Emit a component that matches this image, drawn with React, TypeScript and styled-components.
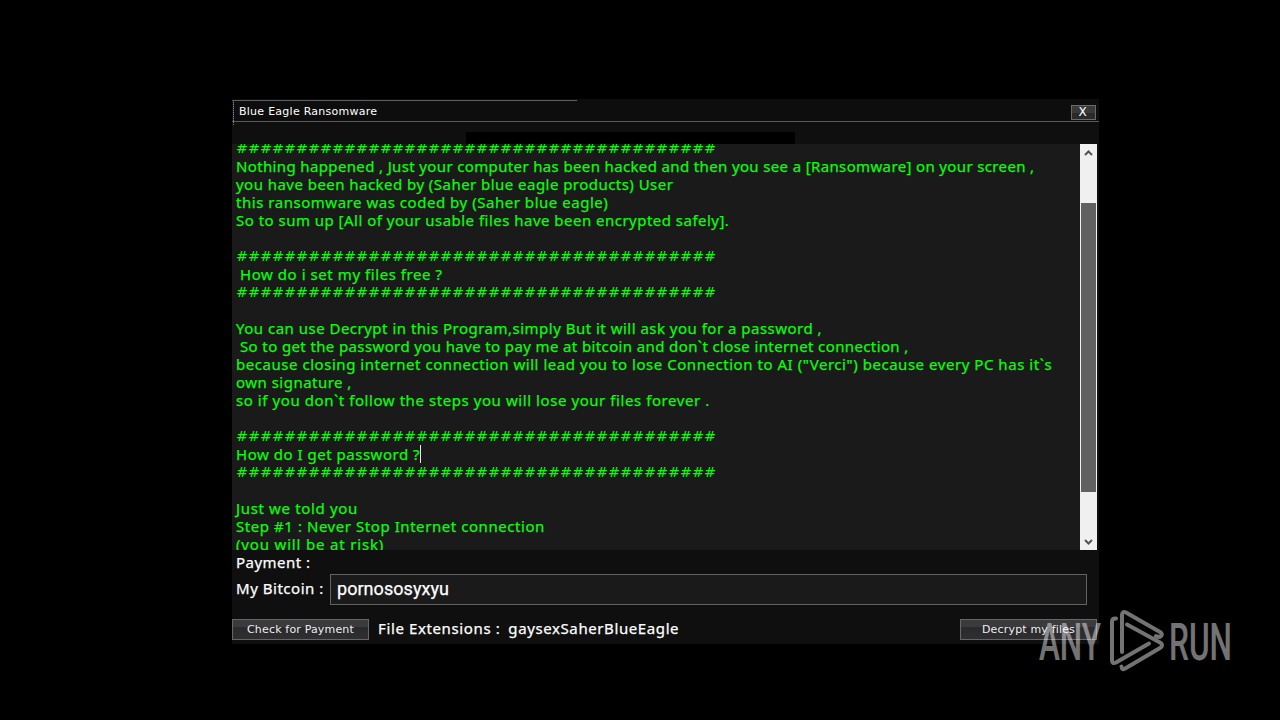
import styled, { createGlobalStyle } from "styled-components";

const GlobalStyle = createGlobalStyle`
  * {
    box-sizing: border-box;
  }
  body {
    margin: 0;
    background-color: #000;
    overflow: hidden;
  }
`;

const Screen = styled.div`
  position: relative;
  width: 1280px;
  height: 720px;
  padding: 99px 181px 76px 232px;
  background-color: #000;
`;

const Window = styled.main`
  display: flex;
  flex-direction: column;
  height: 545px;
  background-color: #0f0f0f;
  font-family: "Noto Sans", sans-serif;
  font-size: 15px;
  color: #fff;
  -webkit-text-stroke: 0.25px;
`;

const TitleBar = styled.header`
  display: flex;
  align-items: center;
  justify-content: space-between;
  height: 23px;
  padding: 3px 3px 0 7px;
  border-bottom: 1px solid #5a5a5a;
  background:
    linear-gradient(#5e5e5e, #5e5e5e) 0 1px / 345px 1px no-repeat,
    repeating-linear-gradient(#8a8a8a 0 1px, #333 1px 2px) 1px 1px / 1px 100% no-repeat,
    #0d0d0d;
  -webkit-text-stroke: 0;
`;

const Title = styled.h1`
  margin: 0;
  font: 11px "DejaVu Sans", sans-serif;
  letter-spacing: 0.26px;
`;

const CloseButton = styled.button`
  width: 25px;
  height: 15px;
  margin-top: 2px;
  padding: 0 2px 0 0;
  border: 1px solid #6a6a6a;
  background: linear-gradient(#3a3a3a 50%, #2a2a2a 50%);
  color: #fff;
  font: 12px/13px "DejaVu Sans", sans-serif;
`;

const Banner = styled.div`
  display: flex;
  align-items: flex-end;
  height: 22px;
  padding-left: 234px;
  background: repeating-linear-gradient(#777 0 1px, #222 1px 2px) 1px 0 / 1px 4px no-repeat;
`;

const BannerBlock = styled.div`
  width: 329px;
  height: 12px;
  background-color: #000;
`;

const Message = styled.section`
  display: flex;
  height: 406px;
  margin-right: 2px;
  overflow: hidden;
  background-color: #1a1a1a;
`;

const MessageText = styled.div`
  flex: 1;
  margin-top: -5px;
  padding-left: 4px;
  color: #0cfc0c;
`;

const Line = styled.div<{ $spacing?: number; $indent?: number }>`
  display: flex;
  height: 18px;
  padding-left: ${(props) => props.$indent ?? 0}px;
  line-height: 18px;
  letter-spacing: ${(props) => props.$spacing ?? 0}px;
  white-space: pre;
`;

const HashLine = styled.div`
  height: 18px;
  font: italic 14.3px/18px "DejaVu Sans", sans-serif;
  letter-spacing: 0.02px;
  -webkit-text-stroke: 0;
`;

const Caret = styled.span`
  width: 1px;
  height: 18px;
  background-color: #e8e8e8;
`;

const ScrollBar = styled.div`
  display: flex;
  flex-direction: column;
  width: 17px;
  padding: 0 1px;
  background-color: #f0f0f0;
`;

const ScrollArrow = styled.svg`
  width: 15px;
  height: 17px;
  fill: none;
  stroke: #555;
  stroke-width: 2;
`;

const ScrollTrack = styled.div`
  flex: 1;
  padding-top: 42px;
`;

const ScrollThumb = styled.div`
  height: 289px;
  background-color: #606060;
`;

const Label = styled.span<{ $spacing: number }>`
  line-height: 18px;
  letter-spacing: ${(props) => props.$spacing}px;
  white-space: pre;
`;

const Payment = styled.div`
  display: flex;
  height: 24px;
  padding: 3px 0 0 4px;
`;

const BitcoinRow = styled.div`
  display: flex;
  justify-content: space-between;
  height: 31px;
  padding: 0 12px 0 4px;
`;

const BitcoinLabel = styled(Label)`
  padding-top: 5px;
`;

const Address = styled.div`
  width: 757px;
  padding-left: 6px;
  border: 1px solid #626262;
  background-color: #1a1a1a;
  font: 18px/28px Roboto, sans-serif;
  letter-spacing: 0.05px;
`;

const Footer = styled.footer`
  display: flex;
  align-items: flex-start;
  flex: 1;
  padding: 14px 2px 0 0;
`;

const Button = styled.button<{ $width: number }>`
  width: ${(props) => props.$width}px;
  height: 21px;
  padding: 0;
  border: 1px solid #666;
  background: linear-gradient(#3b3b3d 0, #3b3b3d 35%, #2a2a2c 40%, #2f2f31 100%);
  color: #eee;
  font: 11px "DejaVu Sans", sans-serif;
  letter-spacing: 0.17px;
  -webkit-text-stroke: 0;
`;

const Extensions = styled.div`
  display: flex;
  flex: 1;
  gap: 8px;
  padding-left: 9px;
`;

const Watermark = styled.svg`
  position: absolute;
  left: 1030px;
  top: 600px;
  width: 210px;
  height: 80px;
  opacity: 0.45;
  font: 500 52px Roboto, sans-serif;
  fill: #fff;
`;

interface LineInterface {
  text: string;
  spacing?: number;
  indent?: number;
  caret?: boolean;
  hashes?: boolean;
}

const hashes: LineInterface = { text: "#".repeat(40), hashes: true };
const blank: LineInterface = { text: "" };

const lines: LineInterface[] = [
  hashes,
  { text: "Nothing happened , Just your computer has been hacked and then you see a [Ransomware] on your screen ,", spacing: 0.36 },
  { text: "you have been hacked by (Saher blue eagle products) User", spacing: 0.46 },
  { text: "this ransomware was coded by (Saher blue eagle)", spacing: 0.53 },
  { text: "So to sum up [All of your usable files have been encrypted safely].", spacing: 0.48 },
  blank,
  hashes,
  { text: "How do i set my files free ?", spacing: 0.56, indent: 4 },
  hashes,
  blank,
  { text: "You can use Decrypt in this Program,simply But it will ask you for a password ,", spacing: 0.49 },
  { text: "So to get the password you have to pay me at bitcoin and don`t close internet connection ,", spacing: 0.38, indent: 4 },
  { text: 'because closing internet connection will lead you to lose Connection to AI ("Verci") because every PC has it`s', spacing: 0.54 },
  { text: "own signature ,", spacing: 0.48 },
  { text: "so if you don`t follow the steps you will lose your files forever .", spacing: 0.57 },
  blank,
  hashes,
  { text: "How do I get password ?", spacing: 0.52, caret: true },
  hashes,
  blank,
  { text: "Just we told you", spacing: 0.65 },
  { text: "Step #1 : Never Stop Internet connection", spacing: 0.56 },
  { text: "(you will be at risk)", spacing: 0.83 },
];

function App() {
  return (
    <Screen>
      <GlobalStyle />
      <Window>
        <TitleBar>
          <Title>Blue Eagle Ransomware</Title>
          <CloseButton>X</CloseButton>
        </TitleBar>
        <Banner>
          <BannerBlock />
        </Banner>
        <Message>
          <MessageText>
            {lines.map((line, i) =>
              line.hashes ? (
                <HashLine key={i}>{line.text}</HashLine>
              ) : (
                <Line key={i} $spacing={line.spacing} $indent={line.indent}>
                  {line.text}
                  {line.caret && <Caret />}
                </Line>
              )
            )}
          </MessageText>
          <ScrollBar>
            <ScrollArrow viewBox="0 0 15 17">
              <path d="M4 11 L7.5 7.5 L11 11" />
            </ScrollArrow>
            <ScrollTrack>
              <ScrollThumb />
            </ScrollTrack>
            <ScrollArrow viewBox="0 0 15 17">
              <path d="M4 7 L7.5 10.5 L11 7" />
            </ScrollArrow>
          </ScrollBar>
        </Message>
        <Payment>
          <Label $spacing={0.48}>Payment :</Label>
        </Payment>
        <BitcoinRow>
          <BitcoinLabel $spacing={0.52}>My Bitcoin :</BitcoinLabel>
          <Address>pornososyxyu</Address>
        </BitcoinRow>
        <Footer>
          <Button $width={137}>Check for Payment</Button>
          <Extensions>
            <Label $spacing={0.62}>File Extensions :</Label>
            <Label $spacing={0.6}>gaysexSaherBlueEagle</Label>
          </Extensions>
          <Button $width={137}>Decrypt my files</Button>
        </Footer>
      </Window>
      <Watermark viewBox="0 0 210 80">
        <text x="9" y="59.5" textLength="62" lengthAdjust="spacingAndGlyphs">ANY</text>
        <text x="139" y="59.5" textLength="63" lengthAdjust="spacingAndGlyphs">RUN</text>
        <g fill="none" stroke="#fff" strokeWidth="4" strokeLinejoin="round" strokeLinecap="round">
          <path d="M86 18.5 Q82 18 82 22 V60 Q82 64.500 86 62.500 L119 43.500" />
          <path d="M92 52 V15 Q92 11 96 12.500 L130 32 Q133 34 131 36 Q129 38 126 36" />
          <path d="M97 24.500 L130 42.500 Q134 45 130 48 L96 68 Q92 71 91.500 66.500" />
        </g>
      </Watermark>
    </Screen>
  );
}

export default App;
